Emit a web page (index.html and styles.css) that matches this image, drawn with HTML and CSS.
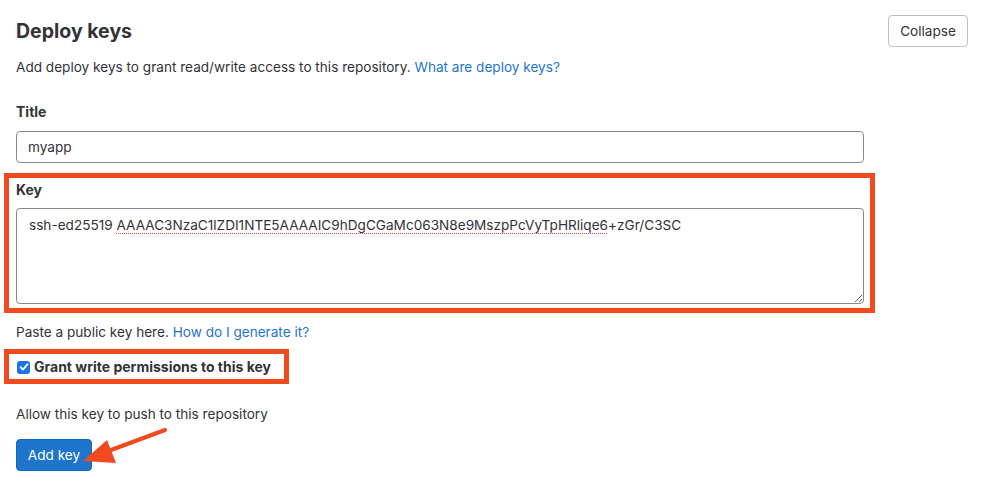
FILE: index.html
```html
<!DOCTYPE html>
<html>
<head>
<meta charset="utf-8">
<link rel="stylesheet" href="styles.css">
</head>
<body>
<section class="panel">
  <header class="head">
    <div class="head-text">
      <h2 class="title">Deploy keys</h2>
      <p class="desc">Add deploy keys to grant read/write access to this repository. <a class="link" href="#">What are deploy keys?</a></p>
    </div>
    <button class="btn-collapse" type="button">Collapse</button>
  </header>

  <form class="form">
    <div class="group">
      <label class="label">Title</label>
      <input class="input" type="text" value="myapp">
    </div>

    <div class="highlight hl-key">
      <label class="label">Key</label>
      <div class="textarea" role="textbox" aria-multiline="true">ssh-ed25519 <span class="squig">AAAAC3NzaC1lZDI1NTE5AAAAIC9hDgCGaMc063N8e9MszpPcVyTpHRliqe6</span>+zGr/C3SC</div>
    </div>

    <p class="help">Paste a public key here. <a class="link" href="#">How do I generate it?</a></p>

    <div class="highlight hl-check">
      <label class="check"><span class="box"><svg viewBox="0 0 12 12" width="12" height="12"><path d="M2.6 6.2 L4.9 8.6 L9.4 3.3" fill="none" stroke="#fff" stroke-width="1.9" stroke-linecap="round" stroke-linejoin="round"/></svg></span>Grant write permissions to this key</label>
    </div>

    <p class="help2">Allow this key to push to this repository</p>

    <div class="actions">
      <button class="btn-primary" type="button">Add key</button>
      <svg class="arrow" width="100" height="50" viewBox="0 0 100 50"><line x1="82" y1="3" x2="20" y2="26" stroke="#f04a1f" stroke-width="4" stroke-linecap="round"/><polygon points="0,34 24,13 33,36" fill="#f04a1f"/></svg>
    </div>
  </form>
</section>
</body>
</html>
```

FILE: styles.css
```css
* { box-sizing: border-box; }
html, body { margin: 0; padding: 0; background: #fff; }
body {
  font-family: Inter, "Liberation Sans", Arial, sans-serif;
  color: #333238;
  font-size: 13.6px;
}
.panel { padding: 0 19px 0 16px; }
.head {
  display: flex;
  justify-content: space-between;
  align-items: flex-start;
  padding-top: 15px;
}
.title {
  margin: 4px 0 0;
  font-size: 19.5px;
  font-weight: 700;
  line-height: 24px;
  color: #333238;
}
.desc { margin: 15px 0 0; line-height: 18px; }
.link { color: #1f75cb; text-decoration: none; }
.btn-collapse {
  font: inherit;
  font-size: 13.6px;
  color: #333238;
  background: #fff;
  border: 1px solid #bfbfc3;
  border-radius: 4px;
  width: 80px;
  height: 32px;
  padding: 0;
}
.form { width: 848px; margin-top: 27px; }
.label { display: block; font-weight: 700; font-size: 14px; line-height: 18px; margin-bottom: 10px; }
.input {
  display: block;
  width: 848px;
  height: 32px;
  border: 1px solid #89888d;
  border-radius: 4px;
  font: inherit;
  color: #333238;
  padding: 0 11px;
}
.highlight { border: 5px solid #f04a1f; }
.hl-key {
  margin: 10px -11px 0 -12px;
  padding: 3px 6px 4px 7px;
}
.hl-key .label { margin-bottom: 9px; }
.textarea {
  display: block;
  width: 848px;
  height: 96px;
  border: 1px solid #89888d;
  border-radius: 4px;
  line-height: 18px;
  color: #333238;
  padding: 7px 12px;
  resize: vertical;
  overflow: auto;
  white-space: nowrap;
}
.squig {
  text-decoration: underline dotted #e0514f;
  text-decoration-thickness: 1px;
  text-underline-offset: 3px;
}
.help { margin: 10px 0 0; line-height: 18px; }
.hl-check {
  display: inline-block;
  margin: 8px 0 0 -12px;
  padding: 4px 13px 3px 7px;
}
.check { display: flex; align-items: center; font-weight: 700; font-size: 14px; line-height: 18px; }
.box {
  width: 13px; height: 13px;
  background: #1a73e8;
  border-radius: 3px;
  margin: 0 4px 0 1px;
  display: inline-flex;
  align-items: center;
  justify-content: center;
}
.box svg { display: block; width: 12px; height: 12px; }
.help2 { margin: 21px 0 0; line-height: 18px; }
.actions { position: relative; margin-top: 16px; height: 40px; }
.btn-primary {
  font: inherit;
  color: #fff;
  background: #1f75cb;
  border: 1px solid #1068bf;
  border-radius: 4px;
  width: 76px;
  height: 32px;
  padding: 0;
}
.arrow { position: absolute; left: 67px; top: -12px; }
```
